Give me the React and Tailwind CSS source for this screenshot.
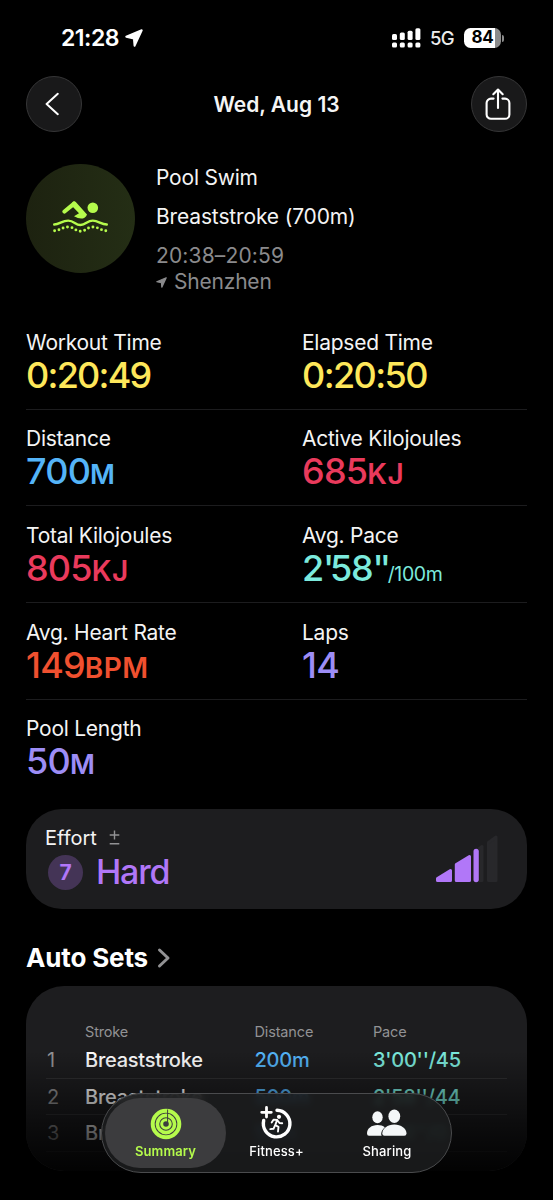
import clsx from 'clsx'

const metrics = [
  [
    { label: 'Workout Time', value: '0:20:49', color: 'text-[#fee75a]', tracking: 'tracking-[-1.75px]' },
    { label: 'Elapsed Time', value: '0:20:50', color: 'text-[#fee75a]', tracking: 'tracking-[-1.6px]' },
  ],
  [
    { label: 'Distance', value: '700', unit: 'M', color: 'text-[#54b4f8]' },
    { label: 'Active Kilojoules', value: '685', unit: 'KJ', color: 'text-[#ea3a5c]' },
  ],
  [
    { label: 'Total Kilojoules', value: '805', unit: 'KJ', color: 'text-[#ea3a5c]' },
    { label: 'Avg. Pace', value: "2'58''", suffix: '/100m', color: 'text-[#7ceadd]' },
  ],
  [
    { label: 'Avg. Heart Rate', value: '149', unit: 'BPM', color: 'text-[#f0502f]' },
    { label: 'Laps', value: '14', color: 'text-[#9d8df6]' },
  ],
  [{ label: 'Pool Length', value: '50', unit: 'M', color: 'text-[#9d8df6]' }],
]

const sets = [
  { id: 1, stroke: 'Breaststroke', distance: '200m', pace: "3'00''/45" },
  { id: 2, stroke: 'Breaststroke', distance: '500m', pace: "2'58''/44" },
  { id: 3, stroke: 'Breaststroke', distance: '50m', pace: "2'46''/0" },
]

function LocationArrow({ className }) {
  return (
    <svg viewBox="0 0 20 20" className={className} fill="currentColor" stroke="currentColor" strokeWidth="2.2" strokeLinejoin="round">
      <path d="M18.6 1.4 10.6 18.6 9.9 10.5 1.4 8.6Z" />
    </svg>
  )
}

function StatusBar() {
  return (
    <div className="flex h-[76px] items-center justify-between pl-[61px] pr-[49px]">
      <div className="flex items-center text-white">
        <span className="text-[23px] font-semibold tracking-[-0.5px]">21:28</span>
        <LocationArrow className="ml-[6px] size-[18px]" />
      </div>
      <div className="flex items-center">
        <svg viewBox="0 0 29 20" className="h-5 w-[29px]" fill="#fff">
          <rect x="0" y="6" width="5" height="6" rx="1.5" />
          <rect x="7.8" y="4.6" width="5" height="7.4" rx="1.5" />
          <rect x="15.6" y="2.8" width="5" height="9.2" rx="1.5" />
          <rect x="23.4" y="0.3" width="5" height="11.7" rx="1.5" />
          <rect x="0" y="14.6" width="5" height="5" rx="1.5" />
          <rect x="7.8" y="14.6" width="5" height="5" rx="1.5" />
          <rect x="15.6" y="14.6" width="5" height="5" rx="1.5" />
          <rect x="23.4" y="14.6" width="5" height="5" rx="1.5" />
        </svg>
        <span className="ml-[9px] mt-[2px] w-[25px] text-[18.5px] font-medium tracking-[-0.6px] text-[#ececec]">5G</span>
        <div className="ml-[9px] flex h-[20px] w-[37px] items-center justify-center rounded-[6.5px] bg-[linear-gradient(90deg,#fff_31px,#8b8b8b_31px)]">
          <span className="text-[17px] font-bold tracking-[-0.2px] text-black">84</span>
        </div>
        <div className="ml-px h-[7px] w-[2px] rounded-r-full bg-[#8b8b8b]" />
      </div>
    </div>
  )
}

function RoundButton({ label, children }) {
  return (
    <button
      aria-label={label}
      className="flex size-[56px] items-center justify-center rounded-full border border-[#363637] bg-[#19191a] text-white"
    >
      {children}
    </button>
  )
}

function Header() {
  return (
    <header className="flex h-[57px] items-start justify-between">
      <RoundButton label="Back">
        <svg viewBox="0 0 14 24" className="mr-[4px] h-[24px] w-[14px]" fill="none" stroke="currentColor" strokeWidth="2" strokeLinecap="round" strokeLinejoin="round">
          <path d="M12.8 1.8 1.6 12l11.2 10.2" />
        </svg>
      </RoundButton>
      <h1 className="text-[21px] font-semibold leading-[57px] text-[#f5f5f5]">Wed, Aug 13</h1>
      <RoundButton label="Share">
        <svg viewBox="0 0 26 34" className="mr-[2px] h-[34px] w-[26px]" fill="none" stroke="currentColor" strokeWidth="2.1" strokeLinecap="round" strokeLinejoin="round">
          <path d="M8.6 11.6H6a4.4 4.4 0 0 0-4.4 4.4v11.4A4.4 4.4 0 0 0 6 31.8h14a4.4 4.4 0 0 0 4.4-4.4V16a4.4 4.4 0 0 0-4.4-4.4h-2.6" />
          <path d="M13 21V2.6M8.3 7.2 13 2.5l4.7 4.7" />
        </svg>
      </RoundButton>
    </header>
  )
}

function SwimBadge() {
  return (
    <div className="flex size-[109px] shrink-0 items-center justify-center rounded-full bg-linear-to-r from-[#1d2210] to-[#242e15] text-[#b5fb4c]">
      <svg viewBox="0 0 56 34" className="mb-px h-[34px] w-[56px]" fill="currentColor">
        <circle cx="39.8" cy="6.7" r="5.3" />
        <path d="M11.5 10.5 20.8 2.8" fill="none" stroke="currentColor" strokeWidth="4.2" strokeLinecap="round" />
        <path d="M19.500 1Q21.300-.300 22.800 1L34 13.500Q33.500 15.500 31.500 16.700 27.500 19 21 15.200L26 12.300 18.500 4.500Z" />
        <path d="M1.200 23.500C6.500 23.500 9 19.600 15.200 19.600S22 24 27.500 24s6.500-4.400 12.300-4.400S48 23.500 53.800 23.500" fill="none" stroke="currentColor" strokeWidth="2.4" strokeLinecap="round" />
        <path d="M1.600 29.800C6.500 29.800 9 26 15.200 26S22 30.200 27.500 30.200 34 26 39.800 26 48 29.800 54 29.800" fill="none" stroke="currentColor" strokeWidth="2.9" strokeLinecap="round" strokeDasharray="0 4.52" />
      </svg>
    </div>
  )
}

function WorkoutInfo() {
  return (
    <section className="mt-[31px] flex">
      <SwimBadge />
      <div className="ml-[21px] text-[21px] text-[#f4f4f4]">
        <p className="leading-[27px] tracking-[-0.2px]">Pool Swim</p>
        <p className="mt-[12px] leading-[27px] tracking-[-0.15px]">Breaststroke (700m)</p>
        <p className="mt-[12px] leading-[27px] tracking-[0.15px] text-[#8a8a8c]">20:38–20:59</p>
        <p className="flex items-center leading-[26px] tracking-[-0.2px] text-[#8a8a8c]">
          <LocationArrow className="mr-[7px] size-[11px]" />
          Shenzhen
        </p>
      </div>
    </section>
  )
}

// Minute and second marks sit tighter than the digits around them
function PaceValue({ value }) {
  return value.split(/('+)/).map((part, i) => (
    <span key={i} className={part.startsWith("'") ? 'tracking-[-4.2px]' : 'tracking-[-1.2px]'}>
      {part}
    </span>
  ))
}

function Metric({ label, value, unit, suffix, color, tracking = 'tracking-[-0.8px]' }) {
  return (
    <div className="pt-[16.5px]">
      <p className="text-[21px] leading-[25px] tracking-[-0.25px] text-[#f4f4f4]">{label}</p>
      <p className={clsx('text-[36px] font-medium leading-[40px]', color, tracking)}>
        {suffix ? <PaceValue value={value} /> : value}
        {unit && (
          <span className={clsx('font-semibold', unit === 'M' ? 'text-[27px]' : 'text-[28px] tracking-[0.5px]')}>{unit}</span>
        )}
        {suffix && <span className="ml-[1px] text-[19.5px] font-normal tracking-[-0.4px]">{suffix}</span>}
      </p>
    </div>
  )
}

function EffortChart() {
  return (
    <svg viewBox="0 0 64 50" className="mt-[9px] h-[50px] w-[64px]">
      <g fill="#28282b" stroke="#28282b" strokeWidth="3" strokeLinejoin="round">
        <path d="M41 17 47 12.5V46.5H41Z" />
        <path d="M53.5 8.5 61 3V46.5H53.5Z" />
      </g>
      <g fill="#b177f8" stroke="#b177f8" strokeWidth="3" strokeLinejoin="round">
        <path d="M2.5 44.5 15.5 36.5V46.5H2.5Z" />
        <path d="M21.3 30.5 34.5 22.5V46.5H21.3Z" />
      </g>
      <rect x="37" y="14.5" width="7.5" height="34" rx="2.8" fill="#1d1d1f" />
      <rect x="38.5" y="14.8" width="5.3" height="33.4" rx="2.6" fill="#b177f8" />
    </svg>
  )
}

function EffortCard() {
  return (
    <section className="mt-[13px] flex h-[100px] items-start justify-between rounded-[36px] bg-[#1d1d1f] pl-[19px] pr-[28px] pt-[16px]">
      <div>
        <p className="flex text-[20px] leading-[26px] text-[#f4f4f4]">
          Effort
          <svg viewBox="0 0 11 16" className="ml-[12px] mt-[5px] h-4 w-[11px]" fill="none" stroke="#929294" strokeWidth="1.4">
            <path d="M5.5 .5v9M.7 5h9.6M.7 13.700h9.600" />
          </svg>
        </p>
        <div className="ml-[3px] flex items-center text-[#b177f8]">
          <span className="mt-px flex size-[35px] items-center justify-center rounded-full bg-[#443456] text-[21px] font-bold">7</span>
          <span className="ml-[13px] text-[34px] font-medium leading-[42px] tracking-[-1.2px]">Hard</span>
        </div>
      </div>
      <EffortChart />
    </section>
  )
}

const setColumns = 'grid grid-cols-[39px_169.5px_118.5px_1fr]'

function AutoSets() {
  return (
    <section>
      <h2 className="mt-[32px] flex items-center text-[26px] font-bold leading-[34px] tracking-[-0.15px] text-white">
        Auto Sets
        <svg viewBox="0 0 14 22" className="ml-[9px] h-[22px] w-[14px]" fill="none" stroke="#929294" strokeWidth="3" strokeLinecap="round" strokeLinejoin="round">
          <path d="M2.5 3 11 11 2.5 19" />
        </svg>
      </h2>
      <div className="relative mt-[11px] h-[185px] overflow-hidden rounded-[38px] bg-[#1d1d1f] px-[20px] pt-[36px]">
        <div className={clsx(setColumns, 'text-[14.5px] leading-[20px] tracking-[-0.15px] text-[#929294]')}>
          <span className="col-start-2">Stroke</span>
          <span>Distance</span>
          <span>Pace</span>
        </div>
        {sets.map((set) => (
          <div key={set.id} className={clsx(setColumns, 'h-[36.5px] items-center border-b border-[#303032] text-[20px] tracking-[-0.25px]')}>
            <span className="pl-px text-[#929294]">{set.id}</span>
            <span className="font-medium text-white">{set.stroke}</span>
            <span className="font-medium text-[#54b4f8]">{set.distance}</span>
            <span className="font-medium text-[#7ceadd]">{set.pace}</span>
          </div>
        ))}
        <div className="absolute inset-0 bg-[linear-gradient(180deg,rgba(0,0,0,0)_35%,rgba(0,0,0,0.34)_58%,rgba(0,0,0,0.66)_80%,rgba(0,0,0,0.92)_100%)]" />
      </div>
    </section>
  )
}

function RingsIcon() {
  return (
    <svg viewBox="0 0 32 32" className="size-[32px]" fill="none" stroke="#b5fb4c">
      <circle cx="16" cy="16" r="13.3" strokeWidth="4" />
      <circle cx="16" cy="16" r="8.6" strokeWidth="3.6" />
      <circle cx="16" cy="16" r="4.3" strokeWidth="3" />
      <path d="M17.6 1.5v13" stroke="#3e3e40" strokeWidth="1" />
    </svg>
  )
}

function FitnessIcon() {
  return (
    <svg viewBox="0 0 34 34" className="mr-[2px] h-[34px] w-[34px]" fill="none" stroke="#fff" strokeLinecap="round" strokeLinejoin="round">
      <path d="M7.5 1.5v9.6M2.7 6.3h9.6" strokeWidth="2.8" />
      <path d="M18 4.3A13.3 13.3 0 1 1 4.7 14.5" strokeWidth="3.4" />
      <circle cx="20" cy="10.8" r="2.1" fill="#fff" stroke="none" />
      <path d="M12.7 16.5l1.8-2.8 3.7.2-2 5.2 3.3 1.7-.5 4.7M15.8 19.8l-1.3 3-3.2.3M18.2 14l2.3 3 2.7.2" strokeWidth="1.9" />
    </svg>
  )
}

function PeopleIcon() {
  return (
    <svg viewBox="0 0 40 28" className="h-[28px] w-[40px]" fill="#f4f7f8">
      <ellipse cx="10.5" cy="8.2" rx="5.2" ry="6" />
      <path d="M0 24.5C0 19.5 4.5 16 10.5 16c3 0 5.5.8 7.3 2.3-2 1.7-3.3 4-3.6 6.2q-.1 1.2.5 2.2H2Q0 26.7 0 24.5Z" />
      <ellipse cx="27.3" cy="7.3" rx="5.9" ry="6.8" />
      <path d="M15.3 24.5c0-5 5.2-9 12-9s12.2 4 12.2 9q0 2.2-2.2 2.2H17.5q-2.2 0-2.2-2.2Z" />
    </svg>
  )
}

function TabBar() {
  const label = 'text-[13px] font-medium leading-[16px] tracking-[0.15px]'

  return (
    <nav className="absolute left-[101px] top-[1093px] flex h-[80px] w-[351px] items-center rounded-full border border-[#4a4b4d] bg-[#1c1d1f]/85 px-[3px] backdrop-blur-[3px]">
      <button className="flex h-[70px] w-[121px] flex-col items-center rounded-full bg-[#3e3e40]/95 pt-[10px]">
        <RingsIcon />
        <span className="mt-[3px] text-[13px] font-semibold leading-[16px] tracking-[0.1px] text-[#b5fb4c]">Summary</span>
      </button>
      <button className="flex h-[70px] w-[101px] flex-col items-center pt-[8px] text-white">
        <FitnessIcon />
        <span className={clsx(label, 'mt-[3px]')}>Fitness+</span>
      </button>
      <button className="flex h-[70px] w-[120px] flex-col items-center pt-[11px] text-white">
        <PeopleIcon />
        <span className={clsx(label, 'mt-[6px]')}>Sharing</span>
      </button>
    </nav>
  )
}

export default function App() {
  return (
    <div className="relative h-[1200px] w-[553px] overflow-hidden bg-black font-[Inter,sans-serif]">
      <StatusBar />
      <main className="px-[26px]">
        <Header />
        <WorkoutInfo />
        <section className="mt-[18px] divide-y divide-[#1c1c1e]">
          {metrics.map((row) => (
            <div key={row[0].label} className="grid h-[96.7px] grid-cols-[276px_1fr]">
              {row.map((metric) => (
                <Metric key={metric.label} {...metric} />
              ))}
            </div>
          ))}
        </section>
        <EffortCard />
        <AutoSets />
      </main>
      <TabBar />
    </div>
  )
}
